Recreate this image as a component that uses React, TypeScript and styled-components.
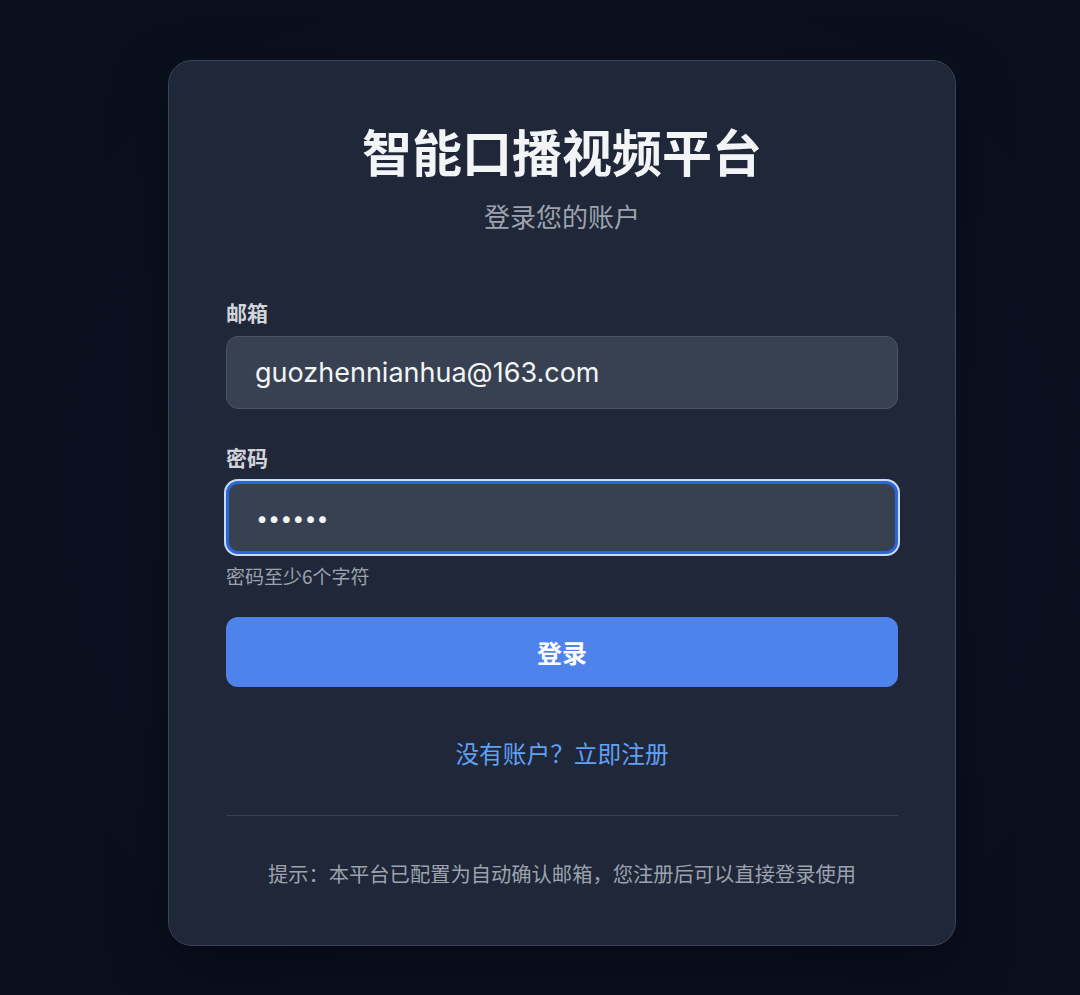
import React from "react"
import styled, { createGlobalStyle } from "styled-components"

const GlobalStyle = createGlobalStyle`
  html, body {
    margin: 0;
    padding: 0;
    background: #0b1020;
  }

  body {
    font-family: "Inter", "Noto Sans CJK SC", sans-serif;
  }
`

const Page = styled.main`
  min-height: 995px;
  box-sizing: border-box;
  padding: 60px 0 0 168px;
  background: radial-gradient(ellipse at 52% 50%, #10162a 0%, #0b1020 60%, #0a0e1d 100%);
`

const Card = styled.section`
  width: 788px;
  box-sizing: border-box;
  padding: 59px 57px 58px;
  display: flex;
  flex-direction: column;
  background: #1f2738;
  border: 1px solid #3a4456;
  border-radius: 24px;
  box-shadow: 0 20px 60px rgba(0, 0, 0, 0.35);
`

const Title = styled.h1`
  margin: 0;
  text-align: center;
  font-family: "Noto Sans CJK SC", sans-serif;
  font-size: 50px;
  line-height: 60px;
  font-weight: 700;
  color: #f3f4f6;
`

const Subtitle = styled.p`
  margin: 18px 0 0;
  text-align: center;
  font-family: "Noto Sans CJK SC", sans-serif;
  font-size: 26px;
  line-height: 36px;
  color: #9ca3af;
`

const Field = styled.div<{ $gap: number }>`
  margin-top: ${(p) => p.$gap}px;
  display: flex;
  flex-direction: column;
`

const Label = styled.label`
  font-family: "Noto Sans CJK SC", sans-serif;
  font-size: 21px;
  line-height: 30px;
  font-weight: 700;
  color: #d1d5db;
  margin-bottom: 9px;
`

const Input = styled.input<{ $focused?: boolean; $size?: number }>`
  height: 73px;
  box-sizing: border-box;
  padding: 0 ${(p) => (p.$focused ? 27 : 28)}px;
  border-radius: 12px;
  background: #374151;
  border: ${(p) => (p.$focused ? "3px solid #2d66d6" : "1px solid #4b5563")};
  box-shadow: ${(p) => (p.$focused ? "0 0 0 2px #c9dbfb" : "none")};
  color: #f3f4f6;
  font-family: "Inter", sans-serif;
  font-size: ${(p) => p.$size ?? 27}px;
  caret-color: #f3f4f6;
  outline: none;
`

const Hint = styled.p`
  margin: 8px 0 0;
  font-family: "Noto Sans CJK SC", sans-serif;
  font-size: 19px;
  line-height: 28px;
  color: #9ca3af;
`

const Button = styled.button`
  margin-top: 27px;
  height: 70px;
  border: none;
  border-radius: 12px;
  background: #4f83ec;
  color: #ffffff;
  font-family: "Noto Sans CJK SC", sans-serif;
  font-size: 25px;
  font-weight: 700;
  cursor: pointer;
`

const RegisterLink = styled.a`
  margin-top: 50px;
  align-self: center;
  font-family: "Noto Sans CJK SC", sans-serif;
  font-size: 23.7px;
  line-height: 32px;
  color: #60a0f5;
  text-decoration: none;
`

const Divider = styled.hr`
  margin: 46px 0 0;
  border: none;
  border-top: 1px solid #374151;
`

const Footnote = styled.p`
  margin: 43px 0 0;
  text-align: center;
  font-family: "Noto Sans CJK SC", sans-serif;
  font-size: 20.3px;
  line-height: 28px;
  color: #9ca3af;
`

const App = () => {
  return (
    <>
      <GlobalStyle />
      <Page>
        <Card>
          <Title>智能口播视频平台</Title>
          <Subtitle>登录您的账户</Subtitle>

          <Field $gap={63}>
            <Label htmlFor="email">邮箱</Label>
            <Input id="email" type="email" defaultValue="guozhennianhua@163.com" />
          </Field>

          <Field $gap={33}>
            <Label htmlFor="password">密码</Label>
            <Input
              id="password"
              type="password"
              defaultValue="123456"
              $focused
              $size={21.5}
              autoFocus
            />
          </Field>
          <Hint>密码至少6个字符</Hint>

          <Button type="button">登录</Button>

          <RegisterLink href="#">没有账户？立即注册</RegisterLink>

          <Divider />

          <Footnote>提示：本平台已配置为自动确认邮箱，您注册后可以直接登录使用</Footnote>
        </Card>
      </Page>
    </>
  )
}

export default App
